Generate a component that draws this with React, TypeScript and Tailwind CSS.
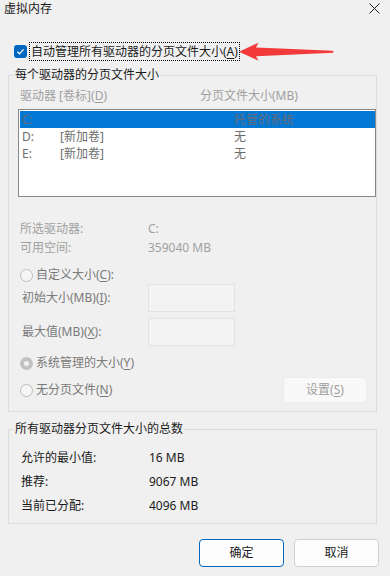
import React from "react";

const font = "font-['Noto_Sans','Noto_Sans_CJK_SC',sans-serif]";

function Radio({ checked }: { checked?: boolean }) {
  if (checked) {
    return (
      <span className="flex h-[13px] w-[13px] shrink-0 items-center justify-center rounded-full bg-[#c2c2c2]">
        <span className="h-[5px] w-[5px] rounded-full bg-[#f3f3f3]" />
      </span>
    );
  }
  return <span className="h-[13px] w-[13px] shrink-0 rounded-full border border-[#bdbdbd] bg-[#f6f6f6]" />;
}

function U({ children }: { children: React.ReactNode }) {
  return <span className="underline underline-offset-[2px] decoration-1">{children}</span>;
}

export default function App() {
  return (
    <div className={`relative h-[576px] w-[390px] overflow-hidden bg-[#f0f0f0] text-[12px] text-[#1a1a1a] ${font}`}>
      {/* title bar */}
      <div className="flex h-[17px] items-center justify-between pl-[4px] pr-[10px]">
        <span className="text-[12px] leading-[14px] text-[#1a1a1a]">虚拟内存</span>
        <svg width="11" height="11" viewBox="0 0 11 11" className="mt-[-1px]">
          <path d="M0.5 0.5 L10.5 10.5 M10.5 0.5 L0.5 10.5" stroke="#1f1f1f" strokeWidth="1" />
        </svg>
      </div>

      {/* auto manage checkbox */}
      <div className="mt-[25px] flex h-[19px] items-center pl-[14px]">
        <span className="flex h-[13px] w-[13px] items-center justify-center rounded-[3px] bg-[#0067c0]">
          <svg width="13" height="13" viewBox="0 0 13 13">
            <polyline points="3.4,6.8 5.5,8.8 9.6,4.4" fill="none" stroke="#ffffff" strokeWidth="1.2" />
          </svg>
        </span>
        <span className="ml-[2px] flex h-[19px] items-center border border-dotted border-[#000] px-[1px] leading-[15px]">
          自动管理所有驱动器的分页文件大小(<U>A</U>)
        </span>
      </div>

      {/* red arrow annotation */}
      <svg className="absolute left-[236px] top-[40px]" width="100" height="24" viewBox="236 40 100 24">
        <polygon
          points="239,51.7 258.5,42.7 256,47.5 333,50.8 333.5,52.8 256,56.2 258.5,60.7"
          fill="#f23a3a"
        />
      </svg>

      {/* group 1 */}
      <fieldset className="ml-[8px] mt-[7px] w-[369px] border border-[#dcdcdc] pb-[8px]">
        <legend className="ml-[5px] px-[1px] leading-[14px] text-[#1a1a1a]">每个驱动器的分页文件大小</legend>
        <div className="mt-[6px] flex h-[16px] items-center pl-[11px] leading-[16px] text-[#a0a0a0]">
          <span className="w-[180px]">
            驱动器 [卷标](<U>D</U>)
          </span>
          <span>分页文件大小(MB)</span>
        </div>
        <div className="ml-[9px] mt-[5px] h-[88px] w-[358px] border border-[#878787] bg-white pl-[1px] pt-[1px]">
          <div className="flex h-[17px] items-center bg-[#0078d4] pl-[2px] leading-[16px] text-[#6a6a74]">
            <span className="w-[38px]">C:</span>
            <span className="w-[174px]"></span>
            <span>托管的系统</span>
          </div>
          <div className="flex h-[17px] items-center pl-[2px] leading-[16px] text-[#6d6d6d]">
            <span className="w-[38px]">D:</span>
            <span className="w-[174px]">[新加卷]</span>
            <span>无</span>
          </div>
          <div className="flex h-[17px] items-center pl-[2px] leading-[16px] text-[#6d6d6d]">
            <span className="w-[38px]">E:</span>
            <span className="w-[174px]">[新加卷]</span>
            <span>无</span>
          </div>
        </div>

        <div className="mt-[22px] flex h-[19px] items-center pl-[11px] leading-[16px] text-[#a0a0a0]">
          <span className="w-[128px]">所选驱动器:</span>
          <span>C:</span>
        </div>
        <div className="flex h-[19px] items-center pl-[11px] leading-[16px] text-[#a0a0a0]">
          <span className="w-[128px]">可用空间:</span>
          <span>359040 MB</span>
        </div>

        <div className="mt-[9px] flex h-[18px] items-center gap-[3px] pl-[11px] leading-[16px] text-[#7a7a7a]">
          <Radio />
          <span>
            自定义大小(<U>C</U>):
          </span>
        </div>
        <div className="flex h-[28px] items-center pl-[13px] leading-[16px] text-[#7a7a7a]">
          <span className="w-[126px]">
            初始大小(MB)(<U>I</U>):
          </span>
          <span className="h-[28px] w-[87px] border border-[#e2e2e2] bg-[#f3f3f3]" />
        </div>
        <div className="mt-[6px] flex h-[28px] items-center pl-[13px] leading-[16px] text-[#7a7a7a]">
          <span className="w-[126px]">
            最大值(MB)(<U>X</U>):
          </span>
          <span className="h-[28px] w-[87px] border border-[#e2e2e2] bg-[#f3f3f3]" />
        </div>

        <div className="mt-[8px] flex h-[18px] items-center gap-[3px] pl-[11px] leading-[16px] text-[#7a7a7a]">
          <Radio checked />
          <span>
            系统管理的大小(<U>Y</U>)
          </span>
        </div>
        <div className="mt-[5px] flex h-[26px] items-center pl-[11px] pr-[9px] leading-[16px] text-[#7a7a7a]">
          <Radio />
          <span className="ml-[3px] flex-1">
            无分页文件(<U>N</U>)
          </span>
          <span className="flex h-[26px] w-[84px] items-center justify-center rounded-[4px] border border-[#ececec] bg-[#f9f9f9] text-[#9e9e9e]">
            设置(<U>S</U>)
          </span>
        </div>
      </fieldset>

      {/* group 2 */}
      <fieldset className="ml-[8px] mt-[10px] w-[369px] border border-[#dcdcdc] pb-[5px]">
        <legend className="ml-[5px] px-[1px] leading-[14px] text-[#1a1a1a]">所有驱动器分页文件大小的总数</legend>
        <div className="mt-[10px] flex h-[24px] items-center pl-[12px] leading-[16px]">
          <span className="w-[128px]">允许的最小值:</span>
          <span>16 MB</span>
        </div>
        <div className="flex h-[24px] items-center pl-[12px] leading-[16px]">
          <span className="w-[128px]">推荐:</span>
          <span>9067 MB</span>
        </div>
        <div className="flex h-[24px] items-center pl-[12px] leading-[16px]">
          <span className="w-[128px]">当前已分配:</span>
          <span>4096 MB</span>
        </div>
      </fieldset>

      {/* buttons */}
      <div className="mt-[15px] flex justify-end gap-[10px] pr-[11px]">
        <button className="flex h-[28px] w-[85px] items-center justify-center rounded-[4px] border border-[#0067c0] bg-[#fdfdfd] leading-[16px] text-[#1a1a1a]">
          确定
        </button>
        <button className="flex h-[28px] w-[85px] items-center justify-center rounded-[4px] border border-[#d0d0d0] bg-[#fdfdfd] leading-[16px] text-[#1a1a1a]">
          取消
        </button>
      </div>
    </div>
  );
}
